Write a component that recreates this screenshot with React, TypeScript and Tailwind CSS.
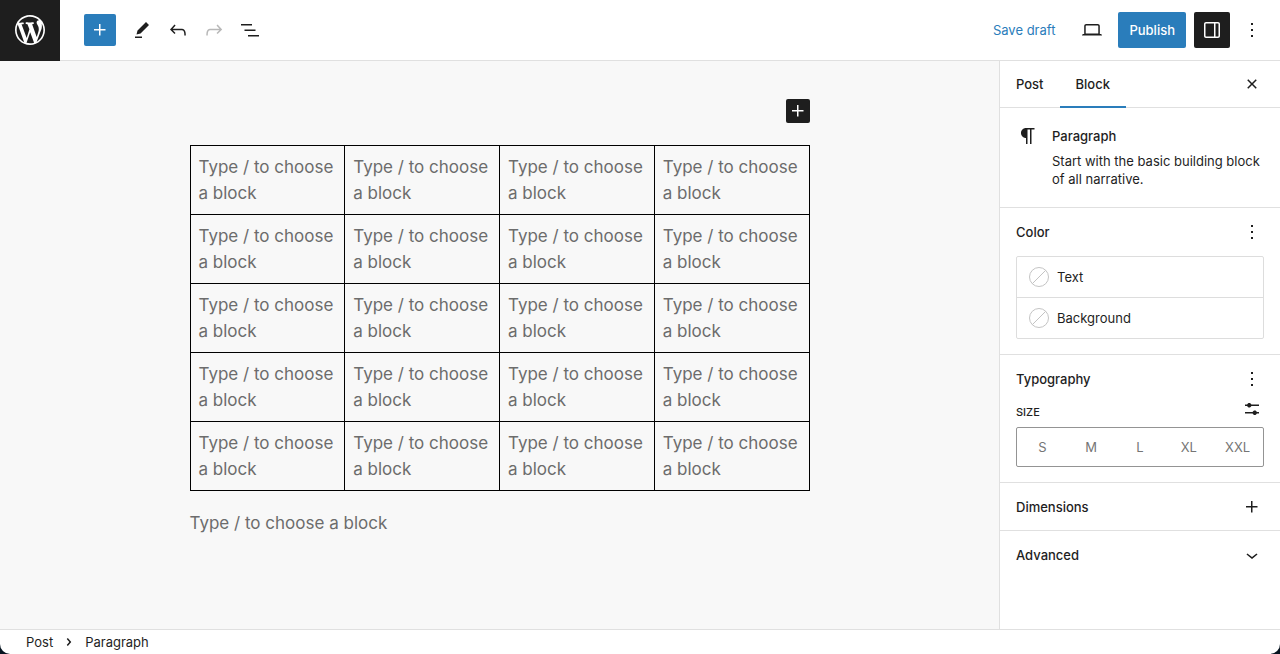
import { ComponentProps, FC, ReactNode, useState } from "react";

const icons = {
  plus: "M11 12.5V17.5H12.5V12.5H17.5V11H12.5V6H11V11H6V12.5H11Z",
  edit: "m19 7-3-3-8.5 8.5-1 4 4-1L19 7Zm-7 11.5H5V20h7v-1.5Z",
  undo: "M18.3 11.7c-.6-.6-1.4-.9-2.3-.9H6.7l2.9-3.3-1.1-1-4.5 5L8.5 16l1-1-2.7-2.7H16c.5 0 .9.2 1.3.5 1 1 1 3.4 1 4.5v.3h1.5v-.2c0-1.5 0-4.3-1.5-5.7z",
  redo: "M15.6 6.5l-1.1 1 2.9 3.3H8c-.9 0-1.7.3-2.3.9-1.4 1.5-1.4 4.2-1.4 5.6v.2h1.5v-.3c0-1.1 0-3.5 1-4.5.3-.3.7-.5 1.3-.5h9.2L14.5 15l1.1 1.1 4.6-4.6-4.6-5z",
  listView: "M3 6h11v1.5H3V6Zm3.5 5.5h11V13h-11v-1.5ZM21 17H10v1.5h11V17Z",
  desktop:
    "M20.5 16h-.7V8c0-1.1-.9-2-2-2H6.2c-1.1 0-2 .9-2 2v8h-.7c-.8 0-1.5.7-1.5 1.5h20c0-.8-.7-1.5-1.5-1.5zM5.7 8c0-.3.2-.5.5-.5h11.6c.3 0 .5.2.5.5v7.6H5.7V8z",
  drawer:
    "M18 4H6c-1.1 0-2 .9-2 2v12c0 1.1.9 2 2 2h12c1.1 0 2-.9 2-2V6c0-1.1-.9-2-2-2zm-4 14.5H6c-.3 0-.5-.2-.5-.5V6c0-.3.2-.5.5-.5h8v13zm4.5-.5c0 .3-.2.5-.5.5h-2.5v-13H18c.3 0 .5.2.5.5v12z",
  more: "M13 19h-2v-2h2v2zm0-6h-2v-2h2v2zm0-6h-2V5h2v2z",
  close:
    "M12 13.06l3.712 3.713 1.061-1.06L13.061 12l3.712-3.712-1.06-1.06L12 10.938 8.288 7.227l-1.061 1.06L10.939 12l-3.712 3.712 1.06 1.061L12 13.061z",
  paragraph:
    "m9.99609 14v-.2251l.00391.0001v6.225h1.5v-14.5h2.5v14.5h1.5v-14.5h3v-1.5h-8.50391c-2.76142 0-5 2.23858-5 5 0 2.7614 2.23858 5 5 5z",
  settings:
    "m19 7.5h-7.628c-.3089-.87389-1.1423-1.5-2.122-1.5-.97966 0-1.81309.62611-2.12197 1.5h-2.12803v1.5h2.12803c.30888.87389 1.14231 1.5 2.12197 1.5.9797 0 1.8131-.62611 2.122-1.5h7.628zM19 15h-2.128c-.3089-.8739-1.1423-1.5-2.122-1.5s-1.8131.6261-2.122 1.5h-7.628v1.5h7.628c.3089.8739 1.1423 1.5 2.122 1.5s1.8131-.6261 2.122-1.5h2.128z",
  chevronDown: "M17.5 11.6L12 16l-5.5-4.4.9-1.2L12 14l4.5-3.6 1 1.2z",
  chevronRight:
    "M10.8622 8.04053L14.2805 12.0286L10.8622 16.0167L9.72327 15.0405L12.3049 12.0286L9.72327 9.01672L10.8622 8.04053Z",
};

const wordpress =
  "M20 10c0-5.51-4.49-10-10-10C4.48 0 0 4.49 0 10c0 5.52 4.48 10 10 10 5.51 0 10-4.48 10-10zM7.78 15.37L4.37 6.22c.55-.02 1.17-.08 1.17-.08.5-.06.44-1.13-.06-1.11 0 0-1.45.11-2.37.11-.18 0-.37 0-.58-.01C4.12 2.69 6.87 1.11 10 1.11c2.33 0 4.45.87 6.05 2.34-.68-.11-1.65.39-1.65 1.58 0 .74.45 1.36.9 2.1.35.61.55 1.36.55 2.46 0 1.49-1.4 5-1.4 5l-3.03-8.37c.54-.02.82-.17.82-.17.5-.05.44-1.25-.06-1.22 0 0-1.44.12-2.38.12-.87 0-2.33-.12-2.33-.12-.5-.03-.56 1.2-.06 1.22l.92.08 1.26 3.41zM17.41 10c.24-.64.74-1.87.43-4.25.7 1.29 1.05 2.71 1.05 4.25 0 3.29-1.73 6.24-4.4 7.78.97-2.59 1.94-5.2 2.92-7.78zM6.1 18.09C3.12 16.65 1.11 13.53 1.11 10c0-1.3.23-2.48.72-3.59C3.25 10.3 4.67 14.2 6.1 18.09zm4.03-6.63l2.58 6.98c-.86.29-1.76.45-2.71.45-.79 0-1.57-.11-2.29-.33.81-2.38 1.62-4.74 2.42-7.1z";

type IconName = keyof typeof icons;

const Icon: FC<{ name: IconName }> = ({ name }) => (
  <svg
    viewBox="0 0 24 24"
    className="h-6 w-6 shrink-0 fill-current"
    aria-hidden="true"
  >
    <path fillRule="evenodd" d={icons[name]} />
  </svg>
);

type IconButtonProps = ComponentProps<"button"> & {
  name: IconName;
  label: string;
};

const IconButton: FC<IconButtonProps> = ({
  name,
  label,
  className = "h-6 w-6",
  ...rest
}) => (
  <button
    type="button"
    aria-label={label}
    className={`flex shrink-0 items-center justify-center ${className}`}
    {...rest}
  >
    <Icon name={name} />
  </button>
);

const Header: FC = () => (
  <header className="flex h-[61px] shrink-0 items-stretch">
    <a
      href="#"
      aria-label="View Posts"
      className="flex w-[60px] shrink-0 justify-center bg-[#1e1e1e] pt-3 text-white"
    >
      <svg viewBox="-2 -2 24 24" className="h-9 w-9 fill-current">
        <path d={wordpress} />
      </svg>
    </a>
    <div className="flex flex-1 items-center justify-between border-b border-[#e0e0e0] pl-6 pr-3.5">
      <div className="flex items-center">
        <IconButton
          name="plus"
          label="Toggle block inserter"
          className="mr-2 h-8 w-8 rounded-xs bg-[#2a7dbb] text-white"
        />
        <IconButton name="edit" label="Tools" className="h-9 w-9" />
        <IconButton name="undo" label="Undo" className="h-9 w-9" />
        <IconButton
          name="redo"
          label="Redo"
          className="h-9 w-9 text-[#b8b8b8]"
          disabled
        />
        <IconButton
          name="listView"
          label="Document Overview"
          className="h-9 w-9"
        />
      </div>
      <div className="flex items-center gap-2">
        <button type="button" className="h-9 px-[11px] text-[#2a7dbb]">
          Save draft
        </button>
        <IconButton name="desktop" label="Preview" className="h-9 w-9" />
        <button
          type="button"
          className="h-9 rounded-xs bg-[#2a7dbb] px-[11px] font-medium text-white"
        >
          Publish
        </button>
        <IconButton
          name="drawer"
          label="Settings"
          className="h-9 w-9 rounded-xs bg-[#1e1e1e] text-white"
        />
        <IconButton name="more" label="Options" className="h-9 w-7" />
      </div>
    </div>
  </header>
);

const placeholder = "Type / to choose a block";
const rows = [0, 1, 2, 3, 4];
const columns = [0, 1, 2, 3];

const Canvas: FC = () => (
  <main className="flex-1 bg-[#f8f8f8] pb-16 pt-[38px] text-[17px] leading-[26px] text-[#6c6c6c]">
    <div className="mx-auto max-w-[620px]">
      <div className="mb-[22px] flex justify-end">
        <IconButton
          name="plus"
          label="Add block"
          className="h-6 w-6 rounded-xs bg-[#1e1e1e] text-white"
        />
      </div>
      <table className="w-full table-fixed border-collapse border border-black">
        <tbody>
          {rows.map((row) => (
            <tr key={row}>
              {columns.map((column) => (
                <td key={column} className="border border-black p-2">
                  {placeholder}
                </td>
              ))}
            </tr>
          ))}
        </tbody>
      </table>
      <p className="mt-[19px]">{placeholder}</p>
    </div>
  </main>
);

type PanelProps = {
  title: string;
  children: ReactNode;
};

const Panel: FC<PanelProps> = ({ title, children }) => (
  <section className="border-t border-[#e0e0e0] px-4 pb-[15px] pt-3">
    <div className="flex items-center justify-between">
      <h2 className="font-medium">{title}</h2>
      <IconButton name="more" label={`${title} options`} />
    </div>
    {children}
  </section>
);

const CollapsedPanel: FC<{ title: string; icon: IconName }> = (props) => (
  <button
    type="button"
    className="flex h-12 w-full items-center justify-between border-t border-[#e0e0e0] px-4 font-medium"
  >
    {props.title}
    <Icon name={props.icon} />
  </button>
);

const ColorRow: FC<{ label: string }> = ({ label }) => (
  <button
    type="button"
    className="flex w-full items-center gap-2 px-3 py-2.5"
  >
    <svg
      viewBox="0 0 20 20"
      className="h-5 w-5 fill-none stroke-[#c4c4c4]"
      aria-hidden="true"
    >
      <circle cx="10" cy="10" r="9.5" />
      <path d="M3.3 16.7 16.7 3.3" />
    </svg>
    {label}
  </button>
);

const tabs = ["Post", "Block"];
const sizes = ["S", "M", "L", "XL", "XXL"];

const Sidebar: FC = () => {
  const [tab, setTab] = useState("Block");
  const [size, setSize] = useState<string | null>(null);

  return (
    <aside className="w-[281px] shrink-0 border-l border-[#e0e0e0]">
      <div className="flex h-[47px] items-stretch border-b border-[#e0e0e0] pr-4">
        <div role="tablist" className="-mb-px flex flex-1">
          {tabs.map((name) => (
            <button
              key={name}
              type="button"
              role="tab"
              aria-selected={tab === name}
              onClick={() => setTab(name)}
              className={`border-b-2 px-4 font-medium ${
                tab === name ? "border-[#2a7dbb]" : "border-transparent"
              }`}
            >
              {name}
            </button>
          ))}
        </div>
        <IconButton name="close" label="Close Settings" className="w-6" />
      </div>
      <div className="flex gap-3 px-4 pb-[19px] pt-4">
        <Icon name="paragraph" />
        <div>
          <h2 className="font-medium leading-6">Paragraph</h2>
          <p className="mt-1 leading-[18px]">
            Start with the basic building block of all narrative.
          </p>
        </div>
      </div>
      <Panel title="Color">
        <div className="mt-3 divide-y divide-[#dddddd] rounded-xs border border-[#dddddd]">
          <ColorRow label="Text" />
          <ColorRow label="Background" />
        </div>
      </Panel>
      <Panel title="Typography">
        <div className="mt-1.5 flex items-end justify-between">
          <h3 className="text-[11px] font-medium uppercase leading-[18px]">
            Size
          </h3>
          <IconButton name="settings" label="Set custom size" />
        </div>
        <div className="mt-1.5 flex h-10 rounded-xs border border-[#949494] p-px">
          {sizes.map((name) => (
            <button
              key={name}
              type="button"
              aria-pressed={size === name}
              onClick={() => setSize(name)}
              className={`flex-1 basis-0 ${
                size === name ? "bg-[#1e1e1e] text-white" : "text-[#757575]"
              }`}
            >
              {name}
            </button>
          ))}
        </div>
      </Panel>
      <CollapsedPanel title="Dimensions" icon="plus" />
      <CollapsedPanel title="Advanced" icon="chevronDown" />
    </aside>
  );
};

export default function App() {
  return (
    <div className="min-h-screen bg-[#06131f] font-['Inter',sans-serif] text-[13px] leading-5 text-[#1e1e1e]">
      <div className="flex min-h-screen flex-col overflow-hidden rounded-b-[10px] bg-white">
        <Header />
        <div className="flex flex-1">
          <Canvas />
          <Sidebar />
        </div>
        <footer className="border-t border-[#e0e0e0]">
          <nav aria-label="Block breadcrumb">
            <ol className="flex h-6 items-center gap-1 pl-[26px]">
              <li>
                <button type="button">Post</button>
              </li>
              <li aria-hidden="true">
                <Icon name="chevronRight" />
              </li>
              <li aria-current="true">Paragraph</li>
            </ol>
          </nav>
        </footer>
      </div>
    </div>
  );
}
